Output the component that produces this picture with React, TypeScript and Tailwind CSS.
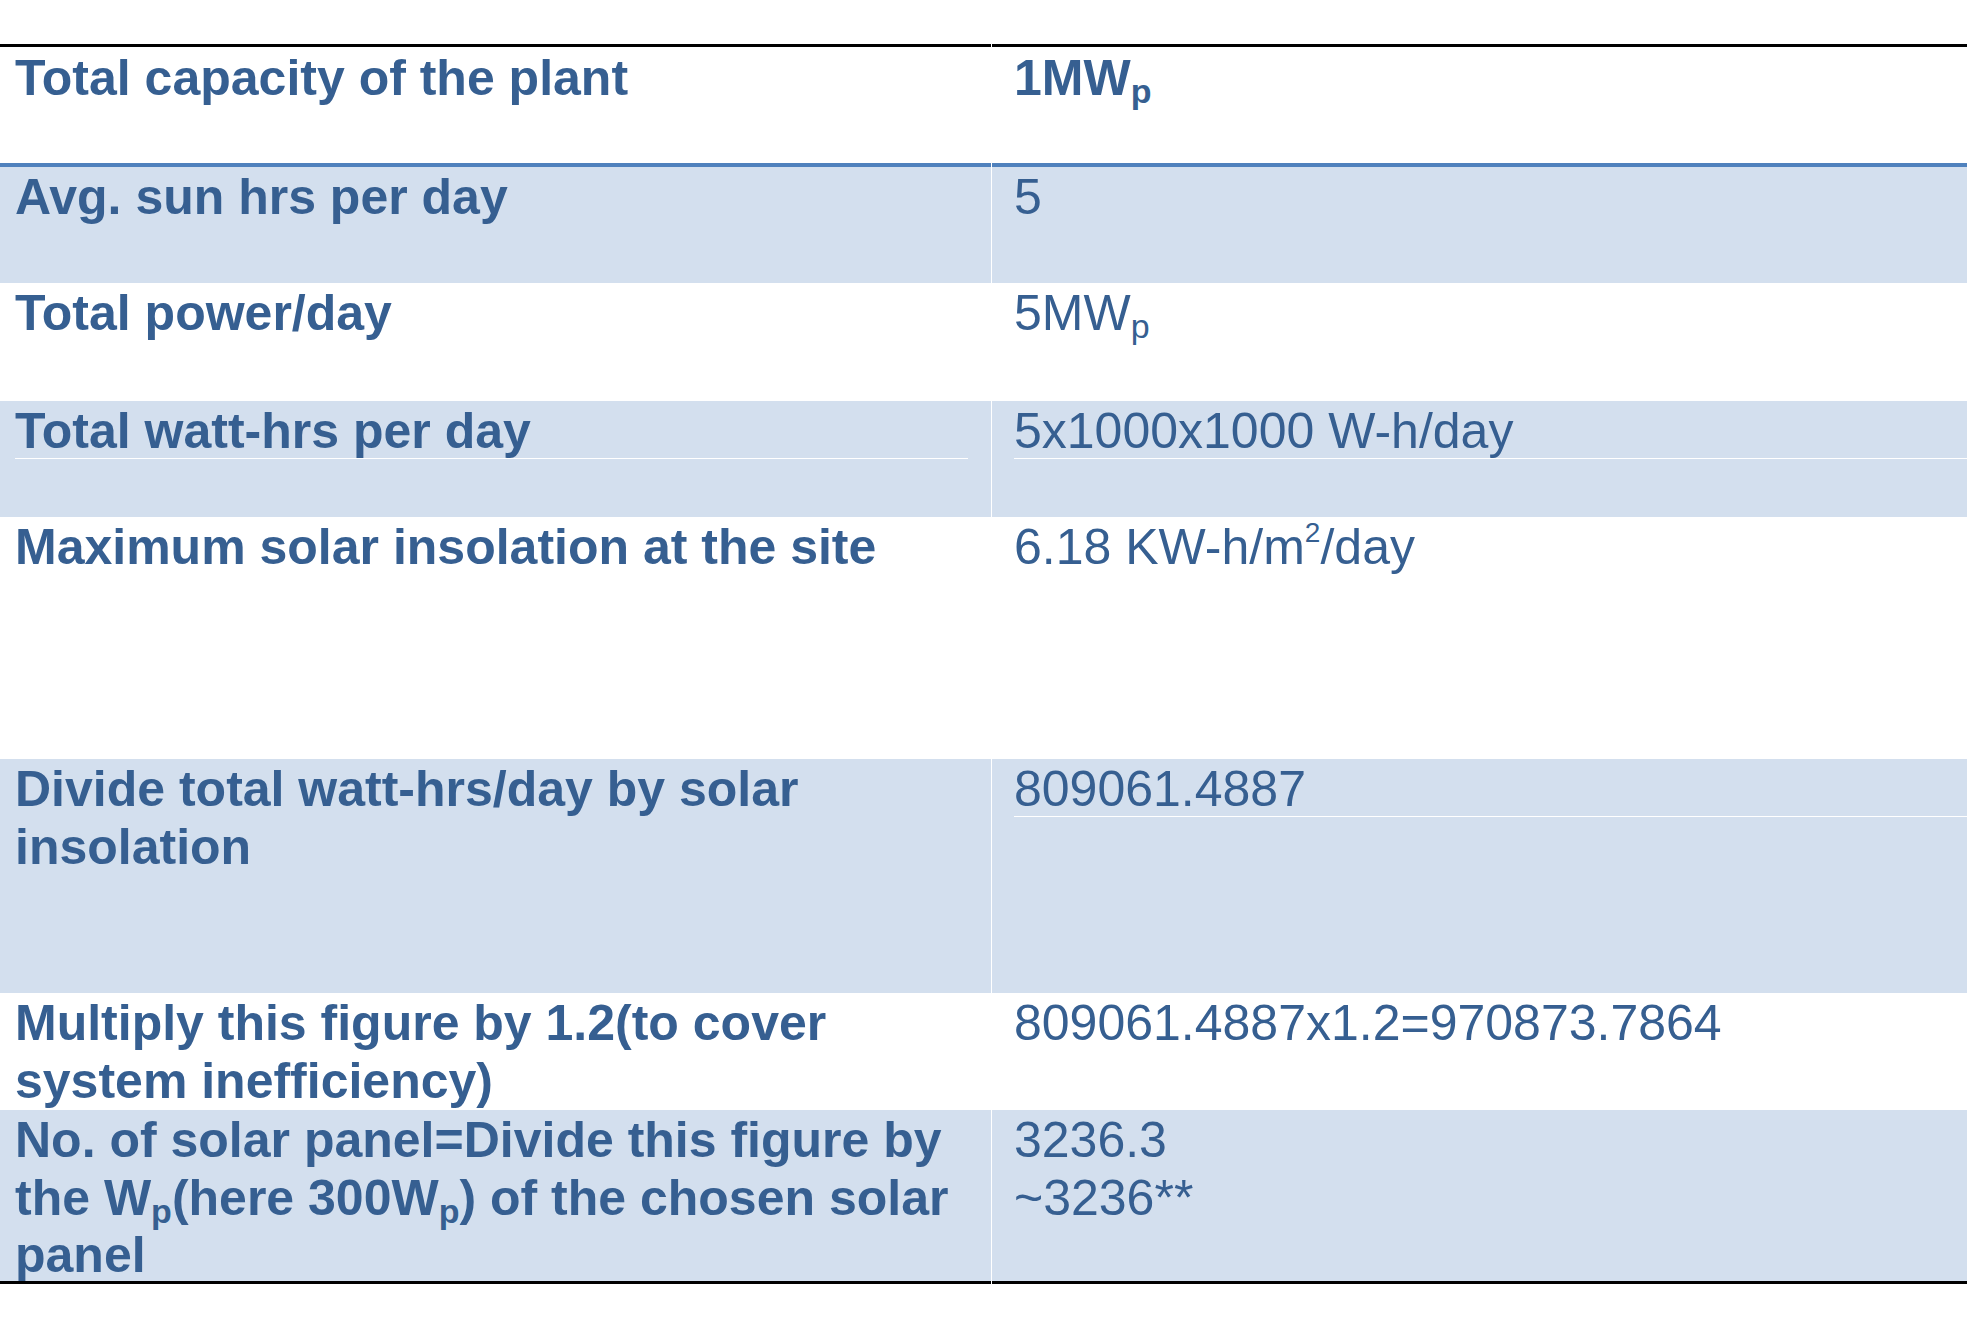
import React from "react";

const TXT = "text-[#365f91]";

function Sub({ children }: { children: React.ReactNode }) {
  return <span className="relative top-[8px] text-[34px] leading-none">{children}</span>;
}

function Sup({ children }: { children: React.ReactNode }) {
  return <span className="relative -top-[22px] text-[28px] leading-none">{children}</span>;
}

type RowProps = {
  h: string;
  blue?: boolean;
  left: React.ReactNode;
  right: React.ReactNode;
};

function Row({ h, blue, left, right }: RowProps) {
  const bg = blue ? "bg-[#d3dfee]" : "bg-white";
  return (
    <div className="grid grid-cols-[991px_1fr] gap-x-px">
      <div className={`${bg} ${h} pl-[15px] pr-[23px] pt-[2px] font-bold`}>{left}</div>
      <div className={`${bg} ${h} pl-[22px] pt-[2px]`}>{right}</div>
    </div>
  );
}

function Rule({ h, color }: { h: string; color: string }) {
  return (
    <div className="grid grid-cols-[991px_1fr] gap-x-px">
      <div className={`${h} ${color}`} />
      <div className={`${h} ${color}`} />
    </div>
  );
}

export default function App() {
  return (
    <div
      className={`w-[1967px] h-[1340px] bg-white pt-[44px] ${TXT} text-[50px] leading-[57.5px]`}
      style={{ fontFamily: '"Liberation Sans", Arial, sans-serif' }}
    >
      <Rule h="h-[3px]" color="bg-black" />
      <Row
        h="h-[116px]"
        left={<div className="pt-px">Total capacity of the plant</div>}
        right={
          <div className="pt-px font-bold">
            1MW<Sub>p</Sub>
          </div>
        }
      />
      <Rule h="h-[4px]" color="bg-[#4f81bd]" />
      <Row h="h-[116px]" blue left={<div>Avg. sun hrs per day</div>} right={<div>5</div>} />
      <Row
        h="h-[118px]"
        left={<div>Total power/day</div>}
        right={
          <div>
            5MW<Sub>p</Sub>
          </div>
        }
      />
      <Row
        h="h-[116px]"
        blue
        left={<div className="h-[56px] border-b border-white">Total watt-hrs per day</div>}
        right={<div className="h-[56px] border-b border-white">5x1000x1000 W-h/day</div>}
      />
      <Row
        h="h-[242px]"
        left={<div>Maximum solar insolation at the site</div>}
        right={
          <div>
            6.18 KW-h/m<Sup>2</Sup>/day
          </div>
        }
      />
      <Row
        h="h-[234px]"
        blue
        left={
          <div>
            Divide total watt-hrs/day by solar
            <br />
            insolation
          </div>
        }
        right={<div className="h-[56px] border-b border-white">809061.4887</div>}
      />
      <Row
        h="h-[117px]"
        left={
          <div>
            Multiply this figure by 1.2(to cover
            <br />
            system inefficiency)
          </div>
        }
        right={<div>809061.4887x1.2=970873.7864</div>}
      />
      <Row
        h="h-[171px]"
        blue
        left={
          <div className="whitespace-nowrap">
            No. of solar panel=Divide this figure by
            <br />
            the W<Sub>p</Sub>(here 300W<Sub>p</Sub>) of the chosen solar
            <br />
            panel
          </div>
        }
        right={
          <div>
            3236.3
            <br />
            ~3236**
          </div>
        }
      />
      <Rule h="h-[3px]" color="bg-black" />
    </div>
  );
}
